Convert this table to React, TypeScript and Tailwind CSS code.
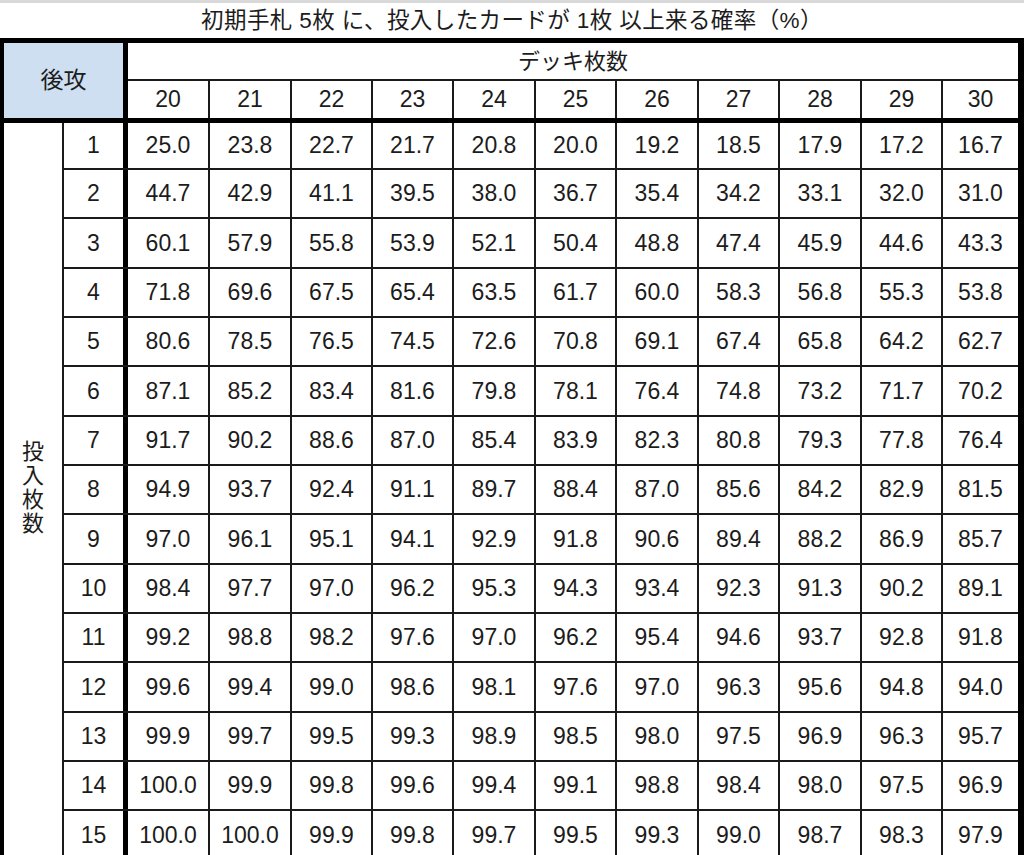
import React from "react";

const cols = [20, 21, 22, 23, 24, 25, 26, 27, 28, 29, 30];

const data: string[][] = [
  ["25.0", "23.8", "22.7", "21.7", "20.8", "20.0", "19.2", "18.5", "17.9", "17.2", "16.7"],
  ["44.7", "42.9", "41.1", "39.5", "38.0", "36.7", "35.4", "34.2", "33.1", "32.0", "31.0"],
  ["60.1", "57.9", "55.8", "53.9", "52.1", "50.4", "48.8", "47.4", "45.9", "44.6", "43.3"],
  ["71.8", "69.6", "67.5", "65.4", "63.5", "61.7", "60.0", "58.3", "56.8", "55.3", "53.8"],
  ["80.6", "78.5", "76.5", "74.5", "72.6", "70.8", "69.1", "67.4", "65.8", "64.2", "62.7"],
  ["87.1", "85.2", "83.4", "81.6", "79.8", "78.1", "76.4", "74.8", "73.2", "71.7", "70.2"],
  ["91.7", "90.2", "88.6", "87.0", "85.4", "83.9", "82.3", "80.8", "79.3", "77.8", "76.4"],
  ["94.9", "93.7", "92.4", "91.1", "89.7", "88.4", "87.0", "85.6", "84.2", "82.9", "81.5"],
  ["97.0", "96.1", "95.1", "94.1", "92.9", "91.8", "90.6", "89.4", "88.2", "86.9", "85.7"],
  ["98.4", "97.7", "97.0", "96.2", "95.3", "94.3", "93.4", "92.3", "91.3", "90.2", "89.1"],
  ["99.2", "98.8", "98.2", "97.6", "97.0", "96.2", "95.4", "94.6", "93.7", "92.8", "91.8"],
  ["99.6", "99.4", "99.0", "98.6", "98.1", "97.6", "97.0", "96.3", "95.6", "94.8", "94.0"],
  ["99.9", "99.7", "99.5", "99.3", "98.9", "98.5", "98.0", "97.5", "96.9", "96.3", "95.7"],
  ["100.0", "99.9", "99.8", "99.6", "99.4", "99.1", "98.8", "98.4", "98.0", "97.5", "96.9"],
  ["100.0", "100.0", "99.9", "99.8", "99.7", "99.5", "99.3", "99.0", "98.7", "98.3", "97.9"],
];

const rowHeights = [
  "h-[47px]",
  "h-[49px]",
  "h-[50px]",
  "h-[49px]",
  "h-[49px]",
  "h-[50px]",
  "h-[49px]",
  "h-[49px]",
  "h-[50px]",
  "h-[49px]",
  "h-[49px]",
  "h-[50px]",
  "h-[49px]",
  "h-[49px]",
  "h-[50px]",
];

export default function App() {
  return (
    <div className="w-[1024px] h-[855px] overflow-hidden bg-white text-[#1c1c1c] font-['Liberation_Sans','Noto_Sans_CJK_JP',sans-serif]">
      {/* Title */}
      <div className="h-[38px] border-t-[3px] border-[#d9d9d9] flex items-center justify-center pt-[2px] text-[22.5px] leading-none tracking-[0.4px]">
        初期手札 5枚 に、投入したカードが 1枚 以上来る確率（%）
      </div>

      {/* Table */}
      <div className="border-t-[5px] border-l-[4px] border-r-[6px] border-black">
        {/* Header */}
        <div className="flex border-b-[5px] border-black">
          <div className="w-[124px] h-[75px] border-r-[5px] border-black bg-[#cddff0] flex items-center justify-center text-[23px]">
            後攻
          </div>
          <div className="flex-1 flex flex-col">
            <div className="h-[38px] border-b-[2px] border-[#1a1a1a] flex items-center justify-center text-[22px]">
              デッキ枚数
            </div>
            <div className="h-[37px] grid grid-cols-[82px_82px_81px_81px_82px_81px_82px_81px_82px_81px_1fr]">
              {cols.map((c, i) => (
                <div
                  key={c}
                  className={
                    i < cols.length - 1
                      ? "flex items-center justify-center text-[23px] border-r-[2px] border-[#1a1a1a]"
                      : "flex items-center justify-center text-[23px]"
                  }
                >
                  {c}
                </div>
              ))}
            </div>
          </div>
        </div>

        {/* Body */}
        <div className="flex">
          <div className="w-[60px] border-r-[2px] border-[#1a1a1a] flex flex-col items-center justify-center pb-[8px] text-[22px] leading-[24px]">
            <span>投</span>
            <span>入</span>
            <span>枚</span>
            <span>数</span>
          </div>
          <div className="flex-1 flex flex-col">
            {data.map((row, r) => (
              <div
                key={r}
                className={`${rowHeights[r]} grid grid-cols-[64px_82px_82px_81px_81px_82px_81px_82px_81px_82px_81px_1fr] border-b-[2px] border-[#1a1a1a]`}
              >
                <div className="flex items-center justify-center text-[23px] border-r-[5px] border-black">
                  {r + 1}
                </div>
                {row.map((v, i) => (
                  <div
                    key={i}
                    className={
                      i < row.length - 1
                        ? "flex items-center justify-center text-[23px] border-r-[2px] border-[#1a1a1a]"
                        : "flex items-center justify-center text-[23px]"
                    }
                  >
                    {v}
                  </div>
                ))}
              </div>
            ))}
          </div>
        </div>
      </div>
    </div>
  );
}
